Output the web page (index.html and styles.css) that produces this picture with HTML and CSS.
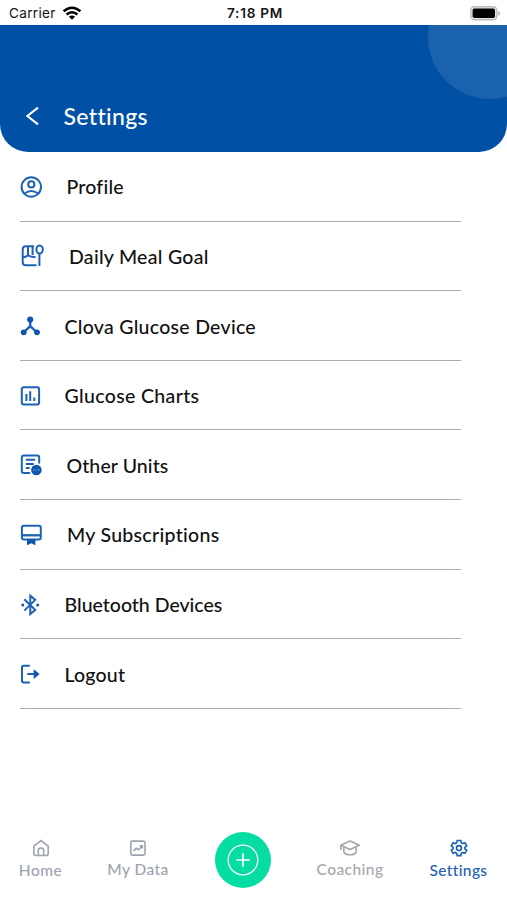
FILE: index.html
```html
<!DOCTYPE html>
<html lang="en">
<head>
<meta charset="utf-8">
<title>Settings</title>
<link rel="stylesheet" href="styles.css">
</head>
<body>
<div class="status">
  <div class="carrier"><span>Carrier</span>
    <svg width="20" height="15" viewBox="0 0 20 15" fill="none" stroke="#000" stroke-width="2.6"><path d="M1.6 5.3Q10-1.8 18.4 5.3M4.6 8.5Q10 4 15.4 8.5"/><path d="M10 13.8 6.9 10.8Q10 8.3 13.1 10.8Z" fill="#000" stroke="none"/></svg>
  </div>
  <div class="time">7:18 PM</div>
  <svg class="battery" width="31" height="15" viewBox="0 0 31 15"><rect x=".8" y=".8" width="26" height="13" rx="3.6" fill="#e6e6e6" stroke="#bdbdbd" stroke-width="1.4"/><rect x="2.6" y="2.6" width="22.4" height="9.4" rx="1.8" fill="#000"/><path d="M28.3 5v5q1.7-.7 1.7-2.5T28.3 5z" fill="#a9a9a9"/></svg>
</div>
<header class="header">
  <span class="bubble"></span>
  <svg class="back" width="14" height="20" viewBox="0 0 14 20" fill="none" stroke="#fff" stroke-width="2"><path d="M12 1.6 1.4 10 12 18.4"/></svg>
  <h1>Settings</h1>
</header>
<main class="list">
  <a class="row profile"><svg viewBox="0 0 24 24"><circle cx="11.3" cy="12" r="9.7"/><circle cx="11.3" cy="9.4" r="3.1"/><path d="M4.8 18.2q6.5-4.6 13 0"/></svg><span>Profile</span></a>
  <a class="row meal"><svg viewBox="0 0 24 24"><path d="M14 2.3H5.8Q2.7 2.3 2.7 5.4V18.2Q2.7 21.3 5.8 21.3H16.5M8 2.3V11M12.6 2.3V11M2.8 13.3Q6 13.3 8.2 11.3 11 13.4 15.5 13"/><ellipse cx="19.6" cy="5.5" rx="3.2" ry="4"/><path d="M19.4 9.5V22"/></svg><span>Daily Meal Goal</span></a>
  <a class="row clova"><svg viewBox="0 0 24 24"><path d="M10.2 5.7V12.2L3.6 18.3M10.2 12.2l6.8 6.1" stroke-width="2.4"/><g class="solid"><circle cx="10.2" cy="5.6" r="3.1"/><circle cx="3.7" cy="18.3" r="2.9"/><circle cx="17" cy="18.3" r="2.9"/></g></svg><span>Clova Glucose Device</span></a>
  <a class="row charts"><svg viewBox="0 0 24 24"><rect x="1.8" y="3.3" width="17.3" height="17.3" rx="2"/><path d="M6.4 10V17M10.2 7.2V17M14.3 13.6V17"/></svg><span>Glucose Charts</span></a>
  <a class="row units"><svg viewBox="0 0 24 24"><path d="M10.2 20H3.8Q1.8 20 1.8 18V4.4Q1.8 2.4 3.8 2.4H17.2Q19.2 2.4 19.2 4.4V10.6M5.8 6.7H15.2M5.8 10.9H13.8M5.8 15H9.6"/><circle class="solid" cx="16.4" cy="17" r="5.3"/><path class="cut" d="M13.2 16.9h6.4"/></svg><span>Other Units</span></a>
  <a class="row subs"><svg viewBox="0 0 24 24"><rect x="1.9" y="2.8" width="18.9" height="13.8" rx="2"/><path d="M2 12.3H20.7" stroke-width="2.3"/><path class="solid" d="M7 16H15.4V22.2L11.2 20.2 7 22.2Z"/></svg><span>My Subscriptions</span></a>
  <a class="row bluetooth"><svg viewBox="0 0 24 24"><path d="M4.3 6.2 15.2 16.9 10.3 21V2.6L15.2 6.9 4.3 17.6"/><g class="solid"><circle cx="2.8" cy="11.9" r="1.5"/><circle cx="17.7" cy="11.9" r="1.5"/></g></svg><span>Bluetooth Devices</span></a>
  <a class="row logout"><svg viewBox="0 0 24 24"><path d="M9.8 3.7H3.7Q2 3.7 2 5.4V18.8Q2 20.5 3.7 20.5H9.8M7.2 12.1H17"/><path class="solid" d="M13.7 7.2 19.7 12.1 13.7 17Z"/></svg><span>Logout</span></a>
</main>
<nav class="tabs">
  <a class="tab home"><svg viewBox="0 0 20 18"><path d="M2.8 7.2 10 1.5 17.2 7.2V14.6Q17.2 16.5 15.3 16.5H4.7Q2.8 16.5 2.8 14.6Z"/><path d="M7.3 16.3V11.3Q7.3 9 10 9T12.7 11.3V16.3"/></svg><span>Home</span></a>
  <a class="tab data"><svg viewBox="0 0 20 18"><rect x="2.8" y="2.1" width="14.2" height="14" rx="1.6"/><path d="M5.5 11.8 8.2 9.3 10.5 10.7 14.2 7M11.7 6.9H14.3V9.5"/></svg><span>My Data</span></a>
  <a class="add"><svg viewBox="0 0 56 56"><circle cx="28" cy="28" r="14.8" stroke-width="1.3"/><path d="M28 21.3V34.7M21.3 28H34.7" stroke-width="1.7"/></svg></a>
  <a class="tab coaching"><svg viewBox="0 0 20 18"><path d="M.8 6.2 10 2 19.2 6.2 10 10.5ZM.9 6.4V11M3.8 8V12.5Q4.5 15.8 10 15.8T16.2 12.5V8"/></svg><span>Coaching</span></a>
  <a class="tab settings"><svg viewBox="0 0 20 18"><path d="M8.2 1.5h3.6l.5 2.3 1.3.8 2.3-.8 1.8 3-1.8 1.5v1.5l1.8 1.5-1.8 3-2.3-.8-1.3.8-.5 2.3H8.2l-.5-2.3-1.3-.8-2.3.8-1.8-3 1.8-1.5V8.3L2.3 6.8l1.8-3 2.3.8 1.3-.8z"/><circle cx="10" cy="9.1" r="2.5"/></svg><span>Settings</span></a>
</nav>
</body>
</html>
```
FILE: styles.css
```css
* { box-sizing: border-box; }
body {
  margin: 0;
  width: 507px;
  height: 900px;
  overflow: hidden;
  background: #fff;
  display: flex;
  flex-direction: column;
  font-family: Lato, "Liberation Sans", sans-serif;
}
.status {
  height: 25.4px;
  flex: none;
  display: grid;
  grid-template-columns: 1fr auto 1fr;
  align-items: center;
  padding: 1px 6px 0 9px;
  font-family: Inter, sans-serif;
  font-size: 13.6px;
  color: #161616;
}
.carrier { display: flex; align-items: center; gap: 6px; letter-spacing: .3px; }
.time { font-weight: 600; letter-spacing: .75px; }
.battery { justify-self: end; }
.header {
  height: 126.6px;
  flex: none;
  position: relative;
  overflow: hidden;
  display: flex;
  align-items: flex-end;
  padding: 0 0 26px 26px;
  border-radius: 0 0 28px 28px;
  background: #0051a5;
  color: #fff;
}
.bubble {
  position: absolute;
  right: -45px;
  top: -50px;
  width: 124px;
  height: 124px;
  border-radius: 50%;
  background: #1b62ae;
}
.header h1 {
  margin: 0 0 -5px 23.5px;
  font-size: 23px;
  line-height: 30px;
  font-weight: 500;
  letter-spacing: .35px;
}
.list { flex: none; width: 461px; padding-left: 20px; }
.row {
  height: 69.64px;
  display: flex;
  align-items: center;
  border-bottom: 1.5px solid #a9adb3;
  color: #111;
  font-size: 19.5px;
  font-weight: 500;
  white-space: nowrap;
}
.row svg {
  width: 24px;
  height: 24px;
  flex: none;
  margin-top: 1px;
  fill: none;
  stroke: #1c62b5;
  stroke-width: 2;
}
.row .solid { fill: #0f56ad; stroke: none; }
.row .cut { stroke: #5f93ce; stroke-width: 1.2; stroke-dasharray: 1.6 .8; }
.row span { margin-left: 20.5px; line-height: 26px; padding-top: 2px; letter-spacing: .2px; }
.profile span { margin-left: 22.5px; }
.meal span { margin-left: 25px; letter-spacing: .28px; }
.units span { margin-left: 22.5px; letter-spacing: .1px; }
.subs span { margin-left: 23px; letter-spacing: .3px; }
.row.clova span { letter-spacing: .28px; }
.row.charts span { letter-spacing: .35px; }
.row.bluetooth span { letter-spacing: 0; }
.tabs {
  flex: 1;
  display: grid;
  grid-template-columns: 81px 114px 95px 120px 97px;
  align-items: start;
  padding-top: 122.7px;
}
.tab {
  display: flex;
  flex-direction: column;
  align-items: center;
  padding-top: 7.6px;
  color: #9da3b0;
  font-size: 15.5px;
  letter-spacing: .45px;
  line-height: 20px;
  font-weight: 500;
}
.tab svg { width: 20px; height: 18px; fill: none; stroke: currentColor; stroke-width: 1.6; margin-bottom: 2.4px; }
.data svg, .coaching svg { margin-bottom: 1.4px; }
.coaching { color: #a5a8ad; }
.settings { color: #1c60b2; letter-spacing: .35px; }
.add {
  width: 56px;
  height: 56px;
  justify-self: center;
  border-radius: 50%;
  background: #06dda4;
}
.add svg { display: block; fill: none; stroke: #fff; }
```
